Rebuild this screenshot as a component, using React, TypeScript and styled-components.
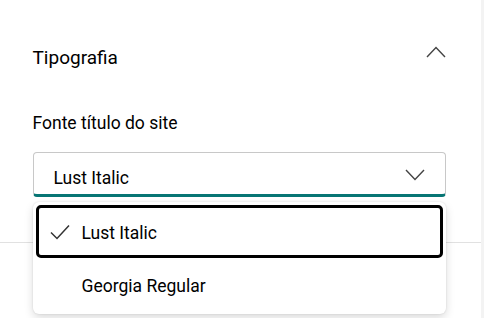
import styled, { createGlobalStyle } from "styled-components"

const GlobalStyle = createGlobalStyle`
  html, body {
    margin: 0;
    padding: 0;
    background: #ffffff;
    overflow: hidden;
  }
  body {
    font-family: Roboto, "Liberation Sans", Arial, sans-serif;
    color: #000000;
  }
`

const Page = styled.div`
  display: flex;
  width: 484px;
  height: 318px;
  overflow: hidden;
`

const Panel = styled.div`
  width: 481px;
  flex-shrink: 0;
  background: #ffffff;
`

const Rail = styled.div`
  flex: 1;
  background: #f3f3f3;
`

const Section = styled.section`
  padding: 46px 35.5px 45px 32.5px;
  border-bottom: 1px solid #e1e1e1;
`

const Header = styled.div`
  display: flex;
  justify-content: space-between;
  align-items: flex-start;
  height: 24px;
`

const Title = styled.h2`
  margin: 0;
  font-size: 19px;
  line-height: 24px;
  font-weight: 400;
`

const Field = styled.div`
  margin-top: 42px;
`

const Label = styled.div`
  font-size: 17.5px;
  line-height: 22px;
`

const SelectWrap = styled.div`
  position: relative;
  margin-top: 18px;
`

const Select = styled.div`
  box-sizing: border-box;
  height: 45px;
  display: flex;
  align-items: center;
  justify-content: space-between;
  padding: 3px 20px 0 20px;
  border: 1px solid #c8c8c8;
  border-bottom: 3px solid #077574;
  border-radius: 4px;
  font-size: 17.5px;
`

const Value = styled.span`
  line-height: 22px;
  margin-top: 5px;
`

const Menu = styled.div`
  position: absolute;
  top: calc(100% + 5px);
  left: 0;
  right: 0;
  padding: 3px;
  background: #ffffff;
  border-radius: 6px;
  box-shadow: 0 0 2px rgba(0, 0, 0, 0.12), 0 4px 10px rgba(0, 0, 0, 0.14);
  z-index: 2;
`

const Option = styled.div<{ $selected?: boolean }>`
  box-sizing: border-box;
  height: 53px;
  display: flex;
  align-items: center;
  gap: 12px;
  padding-left: 11px;
  border: 3px solid ${(p) => (p.$selected ? "#000000" : "transparent")};
  border-radius: 5px;
  font-size: 17.5px;
`

const OptionText = styled.span`
  line-height: 22px;
  margin-top: 3px;
`

const CheckSlot = styled.span`
  width: 20px;
  height: 16px;
  display: flex;
`

const ChevronUp = () => (
  <svg width="20" height="12" viewBox="0 0 20 12" fill="none">
    <path d="M1 11 L10 1.5 L19 11" stroke="#444444" strokeWidth="1.4" />
  </svg>
)

const ChevronDown = () => (
  <svg width="20" height="12" viewBox="0 0 20 12" fill="none">
    <path d="M1 1 L10 10.5 L19 1" stroke="#444444" strokeWidth="1.4" />
  </svg>
)

const Check = () => (
  <svg width="20" height="16" viewBox="0 0 20 16" fill="none">
    <path d="M1 8.5 L7 14.5 L19 1.5" stroke="#333333" strokeWidth="1.5" />
  </svg>
)

const fonts = ["Lust Italic", "Georgia Regular"]

function App() {
  const selected = "Lust Italic"
  return (
    <>
      <GlobalStyle />
      <Page>
        <Panel>
          <Section>
            <Header>
              <Title>Tipografia</Title>
              <ChevronUp />
            </Header>
            <Field>
              <Label>Fonte título do site</Label>
              <SelectWrap>
                <Select>
                  <Value>{selected}</Value>
                  <ChevronDown />
                </Select>
                <Menu>
                  {fonts.map((f) => (
                    <Option key={f} $selected={f === selected}>
                      <CheckSlot>{f === selected && <Check />}</CheckSlot>
                      <OptionText>{f}</OptionText>
                    </Option>
                  ))}
                </Menu>
              </SelectWrap>
            </Field>
          </Section>
        </Panel>
        <Rail />
      </Page>
    </>
  )
}

export default App
